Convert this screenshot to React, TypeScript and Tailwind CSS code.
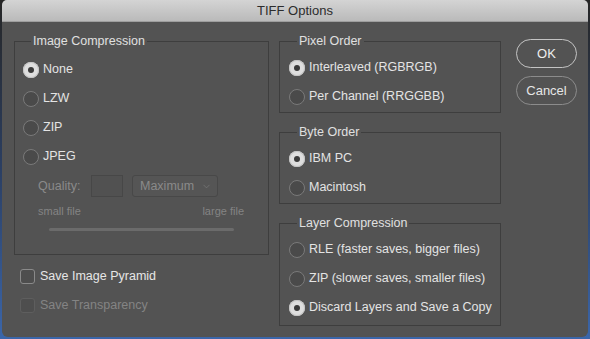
import { ChevronDown } from "lucide-react";

function Radio({ label, checked = false }: { label: string; checked?: boolean }) {
  return (
    <div className="flex h-[29px] items-center gap-[4px]">
      {checked ? (
        <span className="flex h-[16px] w-[16px] items-center justify-center rounded-full bg-[#dedede] shadow-[inset_0_0_0_1px_#c4c4c4]">
          <span className="h-[6px] w-[6px] rounded-full bg-[#3a3a3a]" />
        </span>
      ) : (
        <span className="h-[16px] w-[16px] rounded-full border border-[#7a7a7a] bg-[#4a4a4a]" />
      )}
      <span className="text-[#e4e4e4]">{label}</span>
    </div>
  );
}

function Group({ title, className, children }: { title: string; className?: string; children: React.ReactNode }) {
  return (
    <fieldset className={"border border-[#3e3e3e] " + (className ?? "")}>
      <legend className="ml-[8px] px-[2px] leading-[15px] text-[#e0e0e0]">{title}</legend>
      {children}
    </fieldset>
  );
}

function Check({ label, disabled = false }: { label: string; disabled?: boolean }) {
  return (
    <div className="flex h-[29px] items-center gap-[5px] pl-[6px]">
      <span
        className={
          "h-[15px] w-[15px] rounded-[3px] border bg-[#4e4e4e] " +
          (disabled ? "border-[#5e5e5e]" : "border-[#8a8a8a]")
        }
      />
      <span className={disabled ? "text-[#848484]" : "text-[#e6e6e6]"}>{label}</span>
    </div>
  );
}

export default function App() {
  return (
    <div className="h-[339px] w-[590px] bg-gradient-to-b from-[#262626] via-[#2b3f63] to-[#3b66aa] font-['Liberation_Sans',Arial,sans-serif] text-[12.5px]">
      <div className="ml-[2px] flex h-[337px] w-[586px] flex-col overflow-hidden rounded-b-[6px] rounded-t-[5px] bg-[#535353]">
        <div className="flex h-[22px] items-center justify-center border-b border-[#9e9e9e] bg-gradient-to-b from-[#d4d4d4] to-[#bababa] text-[13px] text-[#2c2c2c]">
          TIFF Options
        </div>

        <div className="flex pl-[12px] pt-[12px]">
          <div className="flex w-[255px] flex-col">
            <Group title="Image Compression" className="h-[221px] pl-[8px] pt-[6px]">
              <Radio label="None" checked />
              <Radio label="LZW" />
              <Radio label="ZIP" />
              <Radio label="JPEG" />
              <div className="mt-[4px] flex h-[22px] items-center pl-[15px]">
                <span className="w-[53px] text-[#8a8a8a]">Quality:</span>
                <span className="h-[22px] w-[32px] border border-[#474747] bg-[#515151]" />
                <span className="ml-[9px] flex h-[22px] w-[86px] items-center justify-between rounded-[3px] border border-[#484848] bg-[#555555] pl-[7px] pr-[5px] text-[#8a8a8a]">
                  Maximum
                  <ChevronDown size={11} strokeWidth={1.5} className="text-[#7a7a7a]" />
                </span>
              </div>
              <div className="mt-[6px] flex w-[221px] justify-between pl-[15px] text-[11px] text-[#848484]">
                <span>small file</span>
                <span>large file</span>
              </div>
              <div className="ml-[26px] mt-[8px] h-[3px] w-[185px] rounded-full bg-[#6b6b6b]" />
            </Group>
            <div className="mt-[7px]">
              <Check label="Save Image Pyramid" />
              <Check label="Save Transparency" disabled />
            </div>
          </div>

          <div className="ml-[10px] flex w-[222px] flex-col gap-[12px]">
            <Group title="Pixel Order" className="pl-[9px] pt-[4px] pb-[1px]">
              <Radio label="Interleaved (RGBRGB)" checked />
              <Radio label="Per Channel (RRGGBB)" />
            </Group>
            <Group title="Byte Order" className="pl-[9px] pt-[4px] pb-[1px]">
              <Radio label="IBM PC" checked />
              <Radio label="Macintosh" />
            </Group>
            <Group title="Layer Compression" className="pl-[9px] pt-[4px] pb-[3px]">
              <Radio label="RLE (faster saves, bigger files)" />
              <Radio label="ZIP (slower saves, smaller files)" />
              <Radio label="Discard Layers and Save a Copy" checked />
            </Group>
          </div>

          <div className="ml-[15px] mt-[5px] flex w-[61px] flex-col gap-[8px]">
            <button className="h-[29px] rounded-full border border-[#c4c4c4] text-[13px] text-[#eeeeee]">OK</button>
            <button className="h-[29px] rounded-full border border-[#8c8c8c] text-[13px] text-[#e6e6e6]">Cancel</button>
          </div>
        </div>
      </div>
    </div>
  );
}
